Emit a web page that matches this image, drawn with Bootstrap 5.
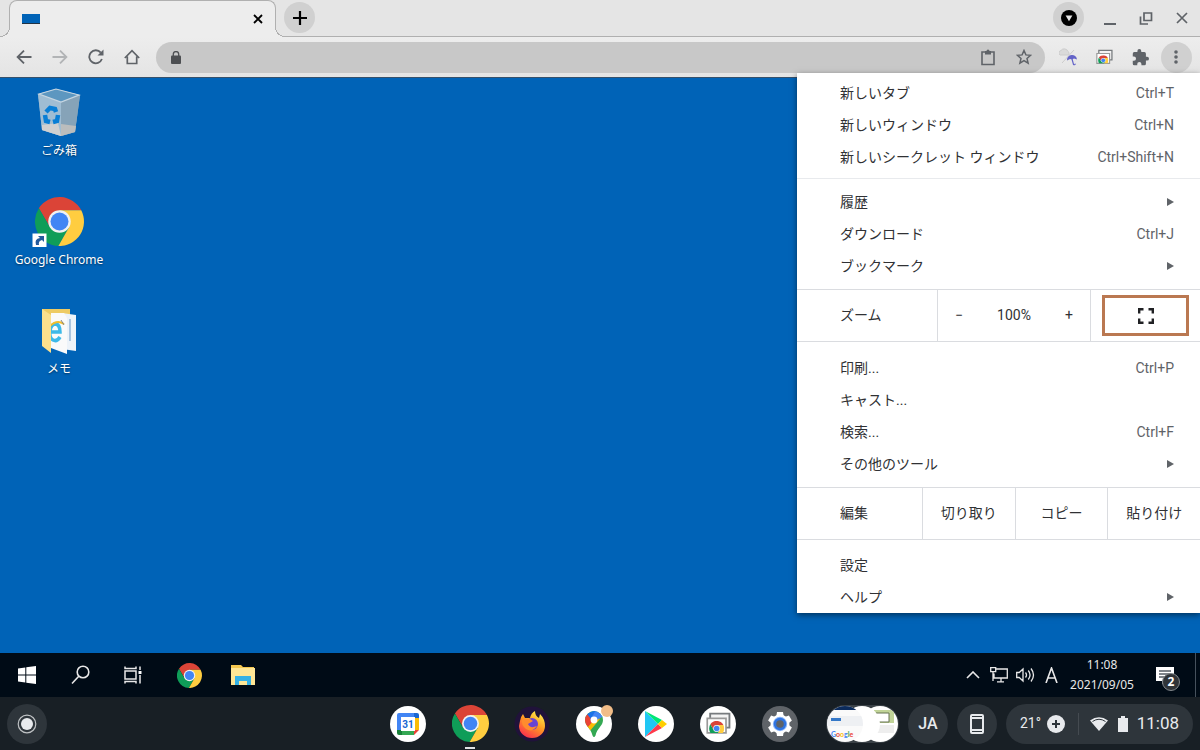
<!DOCTYPE html>
<html lang="ja">
<head>
<meta charset="utf-8">
<meta name="viewport" content="width=device-width, initial-scale=1">
<title>リモート デスクトップ</title>
<link rel="stylesheet" href="https://cdn.jsdelivr.net/npm/bootstrap@5.3.0/dist/css/bootstrap.min.css">
<style>
body{font-family:Roboto,"Noto Sans CJK JP",sans-serif;font-size:14px;color:#303134;background:#0063b7}
.btn{--bs-btn-padding-x:0;--bs-btn-padding-y:0;--bs-btn-border-width:0;--bs-btn-border-radius:0;font-size:inherit;color:inherit;display:inline-flex;align-items:center;justify-content:center}
svg{display:block;flex:none}
/* tab strip */
.strip{height:37px;background:#e5e5e5;box-shadow:inset 0 -1px #b0b0b0}
.page-tab{position:relative;width:267px;height:37px;margin-left:9px;background:#ededed;border:1px solid #b0b0b0;border-width:1px 1px 0;border-radius:8px 8px 0 0}
.page-tab::before,.page-tab::after{content:"";position:absolute;bottom:0;width:10px;height:10px}
.page-tab::before{right:100%;background:radial-gradient(circle at 0 0,#e5e5e5 9px,#b0b0b0 9px,#b0b0b0 10px,#ededed 10px)}
.page-tab::after{left:100%;background:radial-gradient(circle at 100% 0,#e5e5e5 9px,#b0b0b0 9px,#b0b0b0 10px,#ededed 10px)}
.page-thumb{width:18px;height:10px;background:#0063b7;border-bottom:1px solid #234}
.round{width:31px;height:31px;border-radius:50%;background:#d0d0d0}
.strip .round{margin-top:2px}
.win-btn{width:36px;height:36px}
/* toolbar */
.toolbar{height:41px;background:linear-gradient(#ededed,#e4e4e4);border-bottom:1px solid #37516b;padding:0 6px;color:#5f6368}
.tool{width:36px;height:31px}
.omnibox{height:31px;border-radius:16px;background:#c8c8c8;margin:0 5px 0 6px;padding:0 3px 0 2px}
.omnibox input{background:none;border:0;outline:0;min-width:0}
/* browser menu */
.main-menu{width:403px;top:73px;right:0;background:#fff;box-shadow:0 2px 6px rgba(0,0,0,.5);z-index:10}
.group{padding:7px 0;border-bottom:1px solid #dadce0}
.group:first-child{padding:4px 0 5px;border-color:#e8eaed}
.split+.group{padding-top:10px}
.main-menu .group:last-child{padding:9px 0 0;border:0}
.entry{height:32px;padding:0 26px 0 43px;text-align:left}
.main-menu .entry{justify-content:space-between;display:flex;width:100%}
.entry kbd{font:inherit;color:#5f6368;background:none;padding:0}
.arrow{border:4px solid transparent;border-left:7px solid #5f6368;border-right:0}
.split{height:52px;border-bottom:1px solid #dadce0}
.split>*+*{border-left:1px solid #dadce0}
.split-label{padding-left:43px}
.zoom-label{width:140px}.edit-label{width:125px}
.zoomer{width:153px;padding:0 9px}
.zoomer .btn{width:24px;height:32px}
.full{border:3px solid #ba7851;width:87px;height:41px;margin:0 11px 0 auto}
/* remote desktop */
.desktop{padding:10px 0 40px 7px;gap:37px}
.shortcut{width:104px;color:#fff;font:12px/20px "Noto Sans","Noto Sans CJK JP",sans-serif;text-decoration:none;gap:3px;text-shadow:0 1px 2px rgba(0,0,0,.5)}
.shortcut+.shortcut{margin-top:-1px}
.shortcut svg{height:50px}
.taskbar{height:44px;background:#000b16;color:#e8e8e8}
.taskbar .btn{height:44px}
.task{width:54px}
.tray{width:26px}
.clock{width:76px;padding-top:2px;font:12px/20px "Noto Sans",sans-serif;text-align:center}
.edge{width:1px;background:#46515c;margin:0 4px 0 13px}
.note{position:relative;width:34px}
.note-count{position:absolute;left:14px;top:20px;width:18px;height:18px;border-radius:50%;background:#303438;border:1px solid #82878b;font:bold 12px/16px "Noto Sans",sans-serif;color:#fff}
/* shelf */
.shelf{height:53px;background:#181f25;padding:0 7px;color:#e8eaed}
.chip{height:40px;border-radius:20px;background:#2e353b}
.chip.btn{width:40px;border-radius:20px}
.apps{gap:26px;margin-right:28px}
.apps .btn{position:relative;width:36px;height:36px;border-radius:50%}
.running::after{content:"";position:absolute;bottom:-7px;left:13px;width:10px;height:2px;background:#dfe1e4}
.dot{position:absolute;right:-1px;top:-1px;width:12px;height:12px;border-radius:50%;background:#f1bd88}
.status{width:187px;padding:0 14px}
.weather{font-size:14px;margin-right:6px}
.bar{width:1px;height:22px;background:#454b51;margin-left:13px}
.battery{margin-left:10px}
.time{font-size:17px;margin-left:9px}
.holding{width:73px;height:38px}
.shelf-group{gap:9px}
</style>
</head>
<body class="d-flex flex-column min-vh-100">
<svg width="0" height="0" class="position-absolute" aria-hidden="true">
 <symbol id="chrome" viewBox="0 0 48 48">
  <path fill="#db4437" d="M24 13H45.3A24 24 0 0 0 3.8 11L14.5 29.5 24 24z"/>
  <path fill="#0f9d58" d="M3.8 11A24 24 0 0 0 22.9 48L33.5 29.5 24 24 14.5 29.5z"/>
  <path fill="#ffcd40" d="M22.9 48A24 24 0 0 0 45.3 13H24V24L33.5 29.5z"/>
  <circle cx="24" cy="24" r="11" fill="#f1f1f1"/><circle cx="24" cy="24" r="8.8" fill="#4285f4"/>
 </symbol>
 <symbol id="desktops" viewBox="0 0 24 22">
  <path fill="#f4f4f4" stroke="#777b7e" stroke-width="1.8" d="M4 1.5h18.5V15H4z"/><path fill="#fff" stroke="#999" stroke-width="1.6" d="M1.2 6h18v14h-18z"/>
  <svg x="3" y="8.500" width="14.500" height="11.500" viewBox="0 0 48 38" preserveAspectRatio="xMidYMin slice"><use href="#chrome" width="48" height="48"/></svg>
 </symbol>
</svg>

<header>
 <div class="strip d-flex align-items-start">
  <div class="page-tab d-flex align-items-center justify-content-between ps-2">
   <span class="page-thumb ms-1"></span>
   <button class="btn me-2 px-1" aria-label="タブを閉じる"><svg width="10" height="10" viewBox="0 0 10 10" stroke="#000" stroke-width="1.8"><path d="M1 1l8 8M9 1L1 9"/></svg></button>
  </div>
  <button class="btn round ms-2" aria-label="新しいタブ"><svg width="14" height="14" viewBox="0 0 14 14" stroke="#000" stroke-width="2.2"><path d="M7 0v14M0 7h14"/></svg></button>
  <div class="d-flex ms-auto align-items-start">
   <button class="btn round me-2" aria-label="タブを検索"><svg width="16" height="16" viewBox="0 0 16 16"><circle cx="8" cy="8" r="8"/><path fill="#e5e5e5" d="M4.600 5.500h6.800L8 11.200z"/></svg></button>
   <button class="btn win-btn" aria-label="最小化"><svg width="14" height="16" stroke="#5f6368" stroke-width="2"><path d="M1 14h12"/></svg></button>
   <button class="btn win-btn" aria-label="元に戻す"><svg width="14" height="14" fill="none" stroke="#5f6368" stroke-width="1.7"><path d="M5 2h7.500v7.500H5zM1.500 5.500v7.500H9"/></svg></button>
   <button class="btn win-btn" aria-label="閉じる"><svg width="12" height="12" stroke="#5f6368" stroke-width="1.7"><path d="M1 1l10 10M11 1L1 11"/></svg></button>
  </div>
 </div>
 <div class="toolbar d-flex align-items-center">
  <button class="btn tool" aria-label="戻る"><svg width="16" height="14" fill="none" stroke="currentColor" stroke-width="1.8"><path d="M15.500 7H2M8 .6L1.600 7 8 13.400"/></svg></button>
  <button class="btn tool" aria-label="進む"><svg width="16" height="14" fill="none" stroke="#b2b4b6" stroke-width="1.8"><path d="M.5 7H14M8 .6L14.400 7 8 13.400"/></svg></button>
  <button class="btn tool" aria-label="再読み込み"><svg width="16" height="16" fill="none" stroke="currentColor" stroke-width="1.800"><path d="M13.900 10A6.500 6.500 0 1 1 12.800 3.600"/><path d="M15.500 .5v6h-6z" fill="currentColor" stroke="none"/></svg></button>
  <button class="btn tool" aria-label="ホーム"><svg width="16" height="16" fill="none" stroke="currentColor" stroke-width="1.700"><path d="M.8 9L8 1.700 15.200 9M3.300 7.500v7h9.400v-7"/></svg></button>
  <div class="omnibox d-flex align-items-center flex-grow-1">
   <span class="tool d-flex align-items-center justify-content-center"><svg width="10" height="13" viewBox="0 0 10 13"><rect y="4.500" width="10" height="8.500" rx="1" fill="#4d4f52"/><path d="M2.300 5V3.300a2.700 2.700 0 0 1 5.400 0V5" fill="none" stroke="#4d4f52" stroke-width="1.300"/></svg></span>
   <input type="text" class="flex-grow-1" aria-label="アドレス">
   <button class="btn tool" aria-label="クリップボード"><svg width="14" height="17" fill="none" stroke="currentColor" stroke-width="1.600"><path d="M1 3h12v12.500H1z"/><path d="M4 2h1.500a1.500 1.500 0 0 1 3 0H10v3.500H4z" fill="currentColor" stroke="none"/></svg></button>
   <button class="btn tool" aria-label="ブックマークに追加"><svg width="16" height="16" viewBox="0 0 16 16" fill="none" stroke="currentColor" stroke-width="1.500"><path d="M8 1.500l1.900 4.400 4.700.4-3.600 3.200 1.100 4.700L8 11.700l-4.100 2.500L5 9.500 1.400 6.300l4.700-.4z"/></svg></button>
  </div>
  <button class="btn tool" aria-label="天気"><svg width="18" height="18"><path d="M1 7a2.500 2.500 0 0 1 1-4.500 4 4 0 0 1 7 1A2 2 0 0 1 9 7z" fill="#dadada" stroke="#ccc"/><path d="M3 15L15 2" stroke="#ccc"/><path d="M8 12.500a5 5 0 0 1 10-1l-3-1-2 1-2-.5z" fill="#6464c8"/><path d="M13 11l1.500 5.500q1 .8 2-.8" fill="none" stroke="#6464c8" stroke-width="1.200"/></svg></button>
  <button class="btn tool" aria-label="リモート デスクトップ"><svg width="17" height="16"><use href="#desktops"/></svg></button>
  <button class="btn tool" aria-label="拡張機能"><svg width="17" height="17" viewBox="1 1 22 22" fill="currentColor"><path d="M20.500 11H19V7a2 2 0 0 0-2-2h-4V3.500a2.500 2.500 0 0 0-5 0V5H4a2 2 0 0 0-2 2v3.800h1.500a2.700 2.700 0 0 1 0 5.400H2V20a2 2 0 0 0 2 2h3.800v-1.500a2.700 2.700 0 0 1 5.400 0V22H17a2 2 0 0 0 2-2v-4h1.500a2.500 2.500 0 0 0 0-5z"/></svg></button>
  <button class="btn tool" aria-label="メニュー"><span class="round d-flex align-items-center justify-content-center"><svg width="4" height="14" fill="currentColor"><circle cx="2" cy="2" r="1.800"/><circle cx="2" cy="7" r="1.800"/><circle cx="2" cy="12" r="1.800"/></svg></span></button>
 </div>
</header>

<nav class="main-menu position-absolute" aria-label="ブラウザ メニュー">
 <div class="group">
  <button class="btn entry">新しいタブ<kbd>Ctrl+T</kbd></button>
  <button class="btn entry">新しいウィンドウ<kbd>Ctrl+N</kbd></button>
  <button class="btn entry">新しいシークレット ウィンドウ<kbd>Ctrl+Shift+N</kbd></button>
 </div>
 <div class="group">
  <button class="btn entry">履歴<span class="arrow"></span></button>
  <button class="btn entry">ダウンロード<kbd>Ctrl+J</kbd></button>
  <button class="btn entry">ブックマーク<span class="arrow"></span></button>
 </div>
 <div class="split d-flex">
  <div class="split-label zoom-label d-flex align-items-center">ズーム</div>
  <div class="zoomer d-flex align-items-center justify-content-between"><button class="btn" aria-label="縮小">−</button><span>100%</span><button class="btn" aria-label="拡大">+</button></div>
  <div class="d-flex align-items-center flex-grow-1"><button class="btn full" aria-label="全画面表示"><svg width="16" height="16" fill="none" stroke="#202124" stroke-width="2.400"><path d="M1.200 5.500V1.200H5.500M10.500 1.200h4.300V5.500M14.800 10.500v4.300H10.500M5.500 14.800H1.200V10.500"/></svg></button></div>
 </div>
 <div class="group">
  <button class="btn entry">印刷...<kbd>Ctrl+P</kbd></button>
  <button class="btn entry">キャスト...</button>
  <button class="btn entry">検索...<kbd>Ctrl+F</kbd></button>
  <button class="btn entry">その他のツール<span class="arrow"></span></button>
 </div>
 <div class="split d-flex">
  <div class="split-label edit-label d-flex align-items-center">編集</div>
  <button class="btn col">切り取り</button>
  <button class="btn col">コピー</button>
  <button class="btn col">貼り付け</button>
 </div>
 <div class="group">
  <button class="btn entry">設定</button>
  <button class="btn entry">ヘルプ<span class="arrow"></span></button>
 </div>
</nav>

<main class="desktop d-flex flex-column flex-grow-1">
 <a href="#" class="shortcut d-flex flex-column align-items-center">
  <svg width="44" viewBox="0 0 44 50"><path d="M1 6L19 1 43 7 38 44 24 48 5 42z" fill="#8fb0c8"/><path d="M1 6L24 14V48L5 42z" fill="#9fbdd3"/><path d="M24 14L43 7 38 44 24 48z" fill="#86a3b8"/><path d="M5 37L21 35 24 48 5 42z" fill="#d0d0d0"/><path d="M24 36L39 38 38 44 24 48z" fill="#bbbdbd"/><path d="M2 6L19 1 42 7 24 14z" fill="#5d97c0" stroke="#c6d6e2" stroke-width="1.200"/><g fill="none" stroke="#087ed5" stroke-width="4.500"><path d="M9 24l4-4 5 1 1 3M8 27l1 6 4 1M16 34l4-1 1-6"/></g></svg>
  <span>ごみ箱</span>
 </a>
 <a href="#" class="shortcut d-flex flex-column align-items-center">
  <svg width="54" viewBox="0 0 54 50"><use href="#chrome" x="3" width="49" height="49"/><path d="M.5 36.500h14v13.500H.5z" fill="#fff"/><path d="M4 48q-2-6 4-7l-2-2h6v6l-2-2q-4 1-3 5z" fill="#235a9c"/></svg>
  <span>Google Chrome</span>
 </a>
 <a href="#" class="shortcut d-flex flex-column align-items-center">
  <svg width="36" viewBox="0 0 36 50"><path d="M1 3h28v37H1z" fill="#eecb63"/><path d="M21 7l14 2v36l-14-2z" fill="#edf3f9"/><path d="M29 13v22" stroke="#a9c4df" stroke-width="2"/><path d="M10 7l13 0 3 5v36l-16-6z" fill="#fafafa"/><path d="M19 31q-3 5-7 3-4-2-3-9 1-7 6-7 4 1 4 8H9" fill="none" stroke="#3db9e8" stroke-width="3.500"/><path d="M9 20q7-7 14-2" stroke="#f1bd2c" stroke-width="2" fill="none"/><path d="M20 14l3 5" stroke="#888"/><path d="M1 3l9 6v38L1 40z" fill="#fbe08d"/></svg>
  <span>メモ</span>
 </a>
</main>

<footer>
 <div class="taskbar d-flex">
  <button class="btn task" aria-label="スタート"><svg width="18" height="18" fill="#fff"><path d="M0 2.500l7.300-1V8.500H0zM8.300 1.300L18 0v8.500H8.300zM0 9.500h7.300v7L0 15.500zM8.300 9.500H18V18l-9.700-1.300z"/></svg></button>
  <button class="btn task" aria-label="検索"><svg width="20" height="20" fill="none" stroke="currentColor" stroke-width="1.600"><circle cx="12" cy="7" r="5.800"/><path d="M8 11L1 18.500"/></svg></button>
  <button class="btn task pe-1" aria-label="タスク ビュー"><svg width="18" height="18" fill="none" stroke="currentColor" stroke-width="1.500"><path d="M1 5h11v8H1zM1 .5v2h11v-2M1 17.500v-2h11v2M16 .5v3.500M16 9v8.500"/><path d="M14.500 5h3v3h-3z" fill="#fff" stroke="none"/></svg></button>
  <button class="btn task" aria-label="Chrome"><svg width="25" height="25"><use href="#chrome"/></svg></button>
  <button class="btn task" aria-label="エクスプローラー"><svg width="24" height="20"><path d="M0 0h10l2 2h11v17H0z" fill="#f5c850"/><path d="M0 3h24v17H0z" fill="#ffe695"/><path d="M4 20v-9h16v9h-4v-4H8v4z" fill="#35b1e5"/></svg></button>
  <div class="d-flex ms-auto">
   <button class="btn tray" aria-label="隠れているインジケーター"><svg width="14" height="8" fill="none" stroke="currentColor" stroke-width="1.600"><path d="M1 7l6-6 6 6"/></svg></button>
   <button class="btn tray" aria-label="ネットワーク"><svg width="18" height="16" fill="none" stroke="currentColor" stroke-width="1.300"><path d="M6 2h11.300v9H4V6.500M11 11v3.500M7 14.800h7M.7.700h5v4h-5zM3 5v9"/></svg></button>
   <button class="btn tray" aria-label="音量"><svg width="19" height="16" fill="none" stroke="currentColor" stroke-width="1.300"><path d="M.7 5.500h2.500L7 2v12L3.200 10.500H.7zM9.500 5.500q2 2.500 0 5M12.300 3.500q3.500 4.500 0 9M15 1.500q5 6.500 0 13"/></svg></button>
   <button class="btn tray" aria-label="入力モード"><svg width="13" height="16" fill="none" stroke="currentColor" stroke-width="1.600"><path d="M1 16L6.500 1 12 16M3 11h7"/></svg></button>
   <div class="clock"><div>11:08</div><div>2021/09/05</div></div>
   <button class="btn note ms-2" aria-label="通知"><svg width="18" height="17"><path d="M0 0h18v14H9l-3 3v-3H0z" fill="#fff"/><path d="M3 4h12M3 7h12M3 10h8" stroke="#000b16" stroke-width="1.200"/></svg><span class="note-count">2</span></button>
   <span class="edge"></span>
  </div>
 </div>
 <div class="shelf d-flex align-items-center">
  <button class="btn chip" aria-label="ランチャー"><svg width="20" height="20"><circle cx="10" cy="10" r="8.800" fill="none" stroke="#bfc2c4" stroke-width="1.200"/><circle cx="10" cy="10" r="6" fill="#e8eaed"/></svg></button>
  <div class="apps d-flex ms-auto">
   <button class="btn bg-white" aria-label="カレンダー"><svg width="22" height="22" viewBox="0 0 22 22"><path fill="#4285f4" d="M2 0h15v5H5v12H0V2a2 2 0 0 1 2-2z"/><path fill="#1967d2" d="M17 0h3a2 2 0 0 1 2 2v3h-5z"/><path fill="#fbbc04" d="M17 5h5v12h-5z"/><path fill="#34a853" d="M5 17h12v5H5z"/><path fill="#188038" d="M0 17h5v5H2a2 2 0 0 1-2-2z"/><path fill="#ea4335" d="M17 17h5l-5 5z"/><path fill="#fff" d="M4 4h14v14H4z"/><text x="11" y="14.500" text-anchor="middle" font-size="10" font-weight="bold" fill="#1967d2" font-family="Roboto">31</text></svg></button>
   <button class="btn running" aria-label="Chrome"><svg width="37" height="37"><use href="#chrome"/></svg></button>
   <button class="btn" aria-label="Firefox"><svg width="36" height="36"><defs><linearGradient id="fire" x1=".8" y1="0" x2=".2" y2="1"><stop offset="0" stop-color="#fff44f"/><stop offset=".45" stop-color="#ff9a22"/><stop offset="1" stop-color="#fb2652"/></linearGradient></defs><circle cx="18" cy="18" r="17.500" fill="#20123a"/><path fill="url(#fire)" d="M6 15q1-5 3-7l2 4 5 0q1-5 5-7 0 5 4 7l1-4q5 5 5 12a13 12 0 0 1-26 0z"/><circle cx="18" cy="18" r="6" fill="#6944d4"/><path fill="#ff8c2e" d="M8 13l8 0 3 2-5 3q2 5 9 2-5 7-11 3-5-4-4-10z"/></svg></button>
   <button class="btn bg-white" aria-label="マップ"><svg width="20" height="28" viewBox="0 0 20 28"><defs><clipPath id="pin"><path d="M10 1a9 9 0 0 1 9 9c0 6-6 8-7.500 15.500q-1.500 3-3 0C7 18 1 16 1 10a9 9 0 0 1 9-9z"/></clipPath></defs><g clip-path="url(#pin)"><path fill="#34a853" d="M0 0h20v28H0z"/><path fill="#fbbc04" d="M0 17L12 6l4 3L5 22z"/><path fill="#ea4335" d="M0 5l4-1 6 6-7 8H0z"/><path fill="#1a73e8" d="M3 4L10 0h3L7 9z"/><path fill="#4285f4" d="M12 0l8 6-9 5-5-1z"/></g><circle cx="10" cy="10" r="3.400" fill="#fff"/></svg><span class="dot"></span></button>
   <button class="btn bg-white" aria-label="Play ストア"><svg width="24" height="28" viewBox="0 0 24 28"><path fill="#20c7f4" d="M1 1L14 14 1 27z"/><path fill="#00e676" d="M1 1L18 10 14 14z"/><path fill="#ff3a4b" d="M1 27L14 14l4 4z"/><path fill="#ffce00" d="M18 10l5 4-5 4-4-4z"/></svg></button>
   <button class="btn bg-white" aria-label="リモート デスクトップ"><svg width="25" height="23"><use href="#desktops"/></svg></button>
   <button class="btn" aria-label="設定"><svg width="36" height="36" viewBox="-18 -18 36 36"><circle r="18" fill="#5f6368"/><g fill="#fff"><circle r="9.500"/><g id="teeth"><path d="M-3-12h6l1 6h-8zM-3 12h6l1-6h-8z"/></g><use href="#teeth" transform="rotate(60)"/><use href="#teeth" transform="rotate(120)"/></g><circle r="7.200" fill="#8ab4f8"/><circle r="6.200" fill="#2f73df"/><circle r="3.800" fill="#5f6368"/></svg></button>
  </div>
  <div class="shelf-group d-flex align-items-center">
   <button class="btn holding" aria-label="最近のファイル"><svg width="73" height="38"><defs><clipPath id="thumb"><circle cx="19" cy="19" r="18"/></clipPath><clipPath id="thumb-r"><circle cx="54" cy="19" r="18"/></clipPath></defs><rect width="73" height="38" rx="19" fill="#3a4147"/><g clip-path="url(#thumb-r)"><path fill="#fff" d="M36 0h37v38H36z"/><path fill="#c0d397" d="M48 5h20v13H48z"/><path d="M50 8h13v9H50z" fill="#fff" stroke="#667253"/><path fill="#eee" d="M48 20h20v8H48z"/></g><circle cx="36" cy="19" r="18" fill="#fff"/><g clip-path="url(#thumb)"><path fill="#fafafa" d="M0 0h38v38H0z"/><path fill="#0c2b5c" d="M0 0h38v5H0z"/><path fill="#eef0f3" d="M0 11h38v10H0z"/><path fill="#3478c8" d="M5 13h10v3H5z"/><text x="5" y="32" font-size="7" font-weight="bold" font-family="Lato"><tspan fill="#4285f4">G</tspan><tspan fill="#ea4335">o</tspan><tspan fill="#fbbc04">o</tspan><tspan fill="#4285f4">g</tspan><tspan fill="#34a853">l</tspan><tspan fill="#ea4335">e</tspan></text></g></svg></button>
   <button class="btn chip fs-6 fw-medium">JA</button>
   <button class="btn chip" aria-label="スマートフォン"><svg width="14" height="20" viewBox="0 0 14 20"><path fill="#e8eaed" fill-rule="evenodd" d="M2 0h10a2 2 0 0 1 2 2v16a2 2 0 0 1-2 2H2a2 2 0 0 1-2-2V2a2 2 0 0 1 2-2zM2 5v10h10V5zM2 2v1h10V2zM2 17v1h10v-1z"/></svg></button>
   <div class="chip status d-flex align-items-center">
    <span class="weather">21°</span>
    <svg width="18" height="18"><circle cx="9" cy="9" r="9" fill="#e8eaed"/><path d="M9 5v8M5 9h8" stroke="#2e353b" stroke-width="2"/></svg>
    <span class="bar"></span>
    <svg class="ms-auto" width="18" height="14" fill="#e8eaed"><path d="M0 3.500Q9-3 18 3.500L9 14z"/><path d="M2.500 4.500Q9 0 15.500 4.500" fill="none" stroke="#2e353b"/></svg>
    <svg class="battery" width="10" height="16" fill="#e8eaed"><path d="M3 0h4v2h3v14H0V2h3z"/></svg>
    <span class="time">11:08</span>
   </div>
  </div>
 </div>
</footer>
<script src="https://cdn.jsdelivr.net/npm/bootstrap@5.3.0/dist/js/bootstrap.bundle.min.js"></script>
</body>
</html>
